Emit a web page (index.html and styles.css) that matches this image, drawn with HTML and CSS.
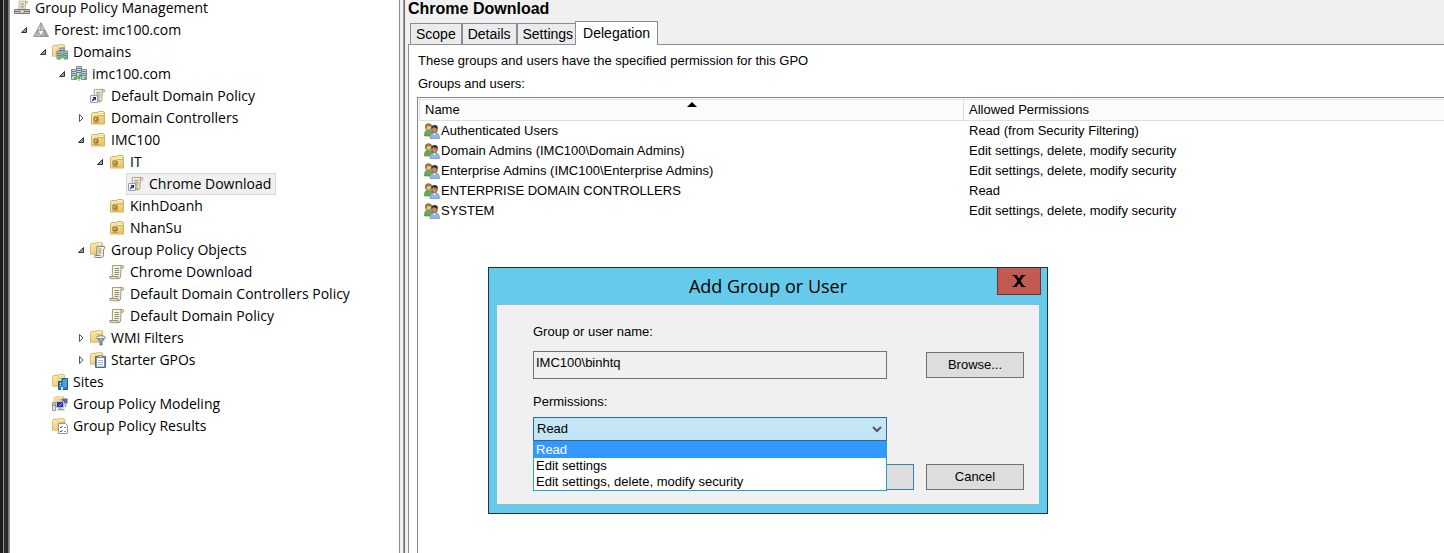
FILE: index.html
```html
<!DOCTYPE html>
<html lang="en">
<head>
<meta charset="utf-8">
<title>Group Policy Management</title>
<link rel="stylesheet" href="styles.css">
</head>
<body>
<svg class="defs" aria-hidden="true">
  <defs>
    <linearGradient id="gold" x1="0" y1="0" x2="1" y2="1"><stop offset="0" stop-color="#fdeeb4"/><stop offset="1" stop-color="#e8bf5e"/></linearGradient>
    <linearGradient id="paper" x1="0" y1="0" x2="1" y2="1"><stop offset="0" stop-color="#fffef2"/><stop offset="1" stop-color="#eadfb4"/></linearGradient>
    <linearGradient id="steel" x1="0" y1="0" x2="1" y2="1"><stop offset="0" stop-color="#f4f4f4"/><stop offset="1" stop-color="#a2a2a2"/></linearGradient>
  </defs>
  <symbol id="folder" viewBox="0 0 16 16">
    <path d="M1.500 14V3.500L2.500 2.500h5l1-1h5l1 1V14z" fill="url(#gold)" stroke="#d9b25c"/>
    <path d="M8.500 4.500h5M9.500 2.500h3" stroke="#fffbe2"/><path d="M8 5.500h6" stroke="#c79b40" stroke-width=".7"/>
  </symbol>
  <symbol id="sheet" viewBox="0 0 16 16">
    <path d="M3.500 1.500h9.500q1.800 0 1.800 1.600t-2.800 1.200L11.500 13q-.3 1.700-2 1.700H2Q.5 14.700.7 12.500h2.600z" fill="url(#paper)" stroke="#a59b78"/>
    <path d="M12.200 4.300q-.8-1.600.4-2.600M1.200 12.600h7.500q-.3 1.900 1 1.900" fill="none" stroke="#8f8768"/>
    <path d="M5.500 4.500H10M5.500 6.500H10M5.500 8.500H10M5.500 10.500H9.500" stroke="#8e8d85"/>
  </symbol>
  <symbol id="tower" viewBox="0 0 6 11">
    <path d="M.5.500h5v10h-5z" fill="#c9d4db" stroke="#788b98"/>
    <path d="M1 2.500h4M1 4.500h4M1 6.500h4" stroke="#667986"/><path d="M3 8h2v2H3z" fill="#28d417"/>
  </symbol>
  <symbol id="towers" viewBox="0 0 16 16">
    <use href="#tower" x="5" y="0" width="6" height="11"/><use href="#tower" x="0" y="3" width="6" height="11"/><use href="#tower" x="10" y="3" width="6" height="11"/>
    <path d="M6 12.500h4M8 10v5" stroke="#8b9ba5"/><path d="M7 11h2v2H7z" fill="#28d417"/>
  </symbol>
  <symbol id="i-gpm" viewBox="0 0 16 16">
    <use href="#sheet" x="2" y="0" width="13" height="12"/>
    <path d="M.5 9.500h15v4H.500z" fill="#c7c9c9" stroke="#7c7d7b"/><path d="M1 11.500h6M9 11.500h6" stroke="#777"/><path d="M6 10h4v3H6z" fill="#f2efdc" stroke="#777" stroke-width=".6"/>
  </symbol>
  <symbol id="i-forest" viewBox="0 0 16 16">
    <path d="M8 .8 15.500 14.500H.500z" fill="url(#steel)" stroke="#999" stroke-linejoin="round"/>
    <path d="M4.700 8.500h6.600L8 14z" fill="#fff" stroke="#999" stroke-linejoin="round"/>
    <path d="M8 1v7M4.500 9l-.8 5M11.500 9l.8 5" stroke="#777" stroke-width=".7"/>
  </symbol>
  <symbol id="i-domains" viewBox="0 0 16 16">
    <use href="#folder" x="-1" y="-1" width="15" height="15"/>
    <path d="M8 4h4v7H8z" fill="#b5c3cc" stroke="#5f7482" stroke-width=".8"/><path d="M5 7h4v8H5zM12 7h3.600v8H12z" fill="#b5c3cc" stroke="#5f7482" stroke-width=".8"/>
    <path d="M8.500 6.500h3M5.500 9.500h3M12.500 9.500h2.500M5.500 11.500h3M12.500 11.500h2.500" stroke="#566a77" stroke-width=".8"/><path d="M6 12.500h2v2H6zM9.500 12h2v2h-2zM13 12.500h2v2h-2z" fill="#28d417"/>
  </symbol>
  <symbol id="i-domain" viewBox="0 0 16 16"><use href="#towers" width="16" height="16"/></symbol>
  <symbol id="i-link" viewBox="0 0 16 16">
    <use href="#sheet" x="1" width="15" height="15"/>
    <path d="M.5 7.500h7v7h-7z" fill="#f5f6fb" stroke="#9b9fb3"/><path d="M2.300 12.700 5 10" stroke="#22226e" stroke-width="1.500"/><path d="M2.500 9H6v3.500z" fill="#22226e"/>
  </symbol>
  <symbol id="i-ou" viewBox="0 0 16 16">
    <use href="#folder" width="16" height="16"/>
    <path d="M4 7h4v4H4z" fill="#f3d887" stroke="#80601e"/><path d="M5.500 8.500H8V11H5.500z" fill="#a17e38"/><path d="M3.500 12.500h6" stroke="#c29a46"/>
  </symbol>
  <symbol id="i-gpo" viewBox="0 0 16 16"><use href="#sheet" width="16" height="16"/></symbol>
  <symbol id="i-gpos" viewBox="0 0 16 16">
    <use href="#folder" x="-1" y="-1" width="15" height="15"/>
    <path d="M7 4.500h7.500q1.300 1.500-.8 2.500l-.5 7q-.3 1.500-1.700 1.500H5q-1-1.300.2-2.500h1.500z" fill="#f5f1df" stroke="#858272"/><path d="M8.500 7h3M8.300 9h3M8.200 11h3M6 13.500h4.500" stroke="#858272"/>
  </symbol>
  <symbol id="i-wmi" viewBox="0 0 16 16">
    <use href="#folder" x="-1" y="-1" width="15" height="15"/>
    <path d="M6.500 7.500h9l-3.500 4v3.500h-2v-3.500z" fill="#9cabba" stroke="#65717f"/><ellipse cx="11" cy="7.300" rx="4.500" ry="1.500" fill="#f5f8fb" stroke="#71808f"/>
  </symbol>
  <symbol id="i-starter" viewBox="0 0 16 16">
    <use href="#folder" x="-1" y="-1" width="15" height="15"/>
    <path d="M5.500 4.500h10v11h-10z" fill="#7891ad" stroke="#4c6888"/><path d="M7 6h7v8.500H7z" fill="#fff"/><path d="M8 8.500h5M8 10.500h5M8 12.500h5" stroke="#9babba" stroke-width=".8"/><path d="M8.500 3.500h4v2h-4z" fill="#ddd" stroke="#777" stroke-width=".7"/>
  </symbol>
  <symbol id="i-sites" viewBox="0 0 16 16">
    <use href="#folder" x="-1" y="-1" width="15" height="15"/>
    <path d="M6.500 7.500H10v-3h5.500v11h-9z" fill="#2f83c1" stroke="#175a91"/><path d="M11.500 6h1M13.500 6h1M11.500 8h1M13.500 8h1M8 9.500h1M11.500 10h1M13.500 10h1M8 11.500h1M11.500 12h1M13.500 12h1" stroke="#c9ebff"/><path d="M9 13h2v3H9z" fill="#bfe5ff"/>
  </symbol>
  <symbol id="i-model" viewBox="0 0 16 16">
    <use href="#folder" x="1" y="-1" width="12" height="12"/>
    <path d="M9.500 2.500h6v5h-6z" fill="#5367b4" stroke="#b7b7b7"/><path d="M4.500 5.500h7v6h-7z" fill="#2b34b0" stroke="#c1c1c1"/><path d="m7 10 3-3" stroke="#8db6ff"/><path d="M5.500 13.500h7M8 11.500v2M13.500 8v3" stroke="#999" stroke-width="1.500"/><path d="M.5 6.500h3v8h-3z" fill="#e2e2e2" stroke="#999"/><path d="M1 9h2" stroke="#555"/>
  </symbol>
  <symbol id="i-results" viewBox="0 0 16 16">
    <use href="#folder" x="-1" y="-1" width="15" height="15"/>
    <path d="M6.500 5.500h7l2 2v8h-9z" fill="#fff" stroke="#8a99aa"/><path d="m8 9 1 1 1.500-2M8 13l1 1 1.500-2" fill="none" stroke="#315b91"/><path d="M12 9.500h2M12 13.500h2" stroke="#8a99aa"/>
  </symbol>
  <symbol id="i-users" viewBox="0 0 16 16">
    <path d="M.5 13Q0 7 4.500 7T9 13z" fill="#6ca653" stroke="#4c8439" stroke-width=".6"/>
    <circle cx="4.500" cy="4" r="3.200" fill="#ecc492" stroke="#8f6a32" stroke-width=".7"/><path d="M1 4Q1 .4 4.700.600T8 4Q5 2.500 3.500 3L2 6.500z" fill="#9a7835"/>
    <path d="M6 15.500Q5.500 9.500 10.500 9.500T15.500 15.500z" fill="#8bb8e8" stroke="#5a87bd" stroke-width=".6"/>
    <ellipse cx="10.500" cy="6.500" rx="2.900" ry="3.500" fill="#c28b5d" stroke="#664124" stroke-width=".6"/><path d="M7.400 6Q7 1.800 10.700 2T13.700 6Q11 4.800 9.500 4.200z" fill="#393536"/><path d="m9.500 10 1 2.500 1-2.500z" fill="#fff"/>
  </symbol>
  <symbol id="x-open" viewBox="0 0 8 8"><path d="M6.500 1.500v5h-5z" fill="#9b9b9b" stroke="#333"/></symbol>
  <symbol id="x-closed" viewBox="0 0 8 8"><path d="M2.500.500 6 4 2.500 7.500z" fill="#fff" stroke="#555"/></symbol>
</svg>

<div class="app">
  <div class="frame-edge"></div>
  <nav class="sidebar" aria-label="Console tree">
    <ul class="tree">
      <li>
        <div class="row root"><a class="item" href="#"><svg class="icon"><use href="#i-gpm"/></svg>Group Policy Management</a></div>
        <ul class="level-one">
          <li>
            <div class="row"><button class="toggle" aria-label="Collapse Forest"><svg><use href="#x-open"/></svg></button><a class="item" href="#"><svg class="icon"><use href="#i-forest"/></svg>Forest: imc100.com</a></div>
            <ul>
              <li>
                <div class="row"><button class="toggle" aria-label="Collapse Domains"><svg><use href="#x-open"/></svg></button><a class="item" href="#"><svg class="icon"><use href="#i-domains"/></svg>Domains</a></div>
                <ul>
                  <li>
                    <div class="row"><button class="toggle" aria-label="Collapse imc100.com"><svg><use href="#x-open"/></svg></button><a class="item" href="#"><svg class="icon"><use href="#i-domain"/></svg>imc100.com</a></div>
                    <ul>
                      <li><div class="row leaf"><a class="item" href="#"><svg class="icon"><use href="#i-link"/></svg>Default Domain Policy</a></div></li>
                      <li><div class="row"><button class="toggle" aria-label="Expand Domain Controllers"><svg><use href="#x-closed"/></svg></button><a class="item" href="#"><svg class="icon"><use href="#i-ou"/></svg>Domain Controllers</a></div></li>
                      <li>
                        <div class="row"><button class="toggle" aria-label="Collapse IMC100"><svg><use href="#x-open"/></svg></button><a class="item" href="#"><svg class="icon"><use href="#i-ou"/></svg>IMC100</a></div>
                        <ul>
                          <li>
                            <div class="row"><button class="toggle" aria-label="Collapse IT"><svg><use href="#x-open"/></svg></button><a class="item" href="#"><svg class="icon"><use href="#i-ou"/></svg>IT</a></div>
                            <ul><li><div class="row leaf"><a class="item selected" href="#" aria-current="true"><svg class="icon"><use href="#i-link"/></svg>Chrome Download</a></div></li></ul>
                          </li>
                          <li><div class="row leaf"><a class="item" href="#"><svg class="icon"><use href="#i-ou"/></svg>KinhDoanh</a></div></li>
                          <li><div class="row leaf"><a class="item" href="#"><svg class="icon"><use href="#i-ou"/></svg>NhanSu</a></div></li>
                        </ul>
                      </li>
                      <li>
                        <div class="row"><button class="toggle" aria-label="Collapse Group Policy Objects"><svg><use href="#x-open"/></svg></button><a class="item" href="#"><svg class="icon"><use href="#i-gpos"/></svg>Group Policy Objects</a></div>
                        <ul>
                          <li><div class="row leaf"><a class="item" href="#"><svg class="icon"><use href="#i-gpo"/></svg>Chrome Download</a></div></li>
                          <li><div class="row leaf"><a class="item" href="#"><svg class="icon"><use href="#i-gpo"/></svg>Default Domain Controllers Policy</a></div></li>
                          <li><div class="row leaf"><a class="item" href="#"><svg class="icon"><use href="#i-gpo"/></svg>Default Domain Policy</a></div></li>
                        </ul>
                      </li>
                      <li><div class="row"><button class="toggle" aria-label="Expand WMI Filters"><svg><use href="#x-closed"/></svg></button><a class="item" href="#"><svg class="icon"><use href="#i-wmi"/></svg>WMI Filters</a></div></li>
                      <li><div class="row"><button class="toggle" aria-label="Expand Starter GPOs"><svg><use href="#x-closed"/></svg></button><a class="item" href="#"><svg class="icon"><use href="#i-starter"/></svg>Starter GPOs</a></div></li>
                    </ul>
                  </li>
                </ul>
              </li>
              <li><div class="row leaf"><a class="item" href="#"><svg class="icon"><use href="#i-sites"/></svg>Sites</a></div></li>
              <li><div class="row leaf"><a class="item" href="#"><svg class="icon"><use href="#i-model"/></svg>Group Policy Modeling</a></div></li>
              <li><div class="row leaf"><a class="item" href="#"><svg class="icon"><use href="#i-results"/></svg>Group Policy Results</a></div></li>
            </ul>
          </li>
        </ul>
      </li>
    </ul>
  </nav>
  <div class="splitter"></div>
  <main class="details">
    <h1>Chrome Download</h1>
    <div class="tabs" role="tablist">
      <button class="tab" role="tab">Scope</button><button class="tab" role="tab">Details</button><button class="tab" role="tab">Settings</button><button class="tab active" role="tab" aria-selected="true">Delegation</button>
    </div>
    <section class="panel">
      <p>These groups and users have the specified permission for this GPO</p>
      <p id="list-label">Groups and users:</p>
      <div class="list">
        <table aria-labelledby="list-label">
          <thead><tr><th class="name-col" aria-sort="ascending"><div class="heading">Name<svg class="sort" viewBox="0 0 10 5"><path d="M0 5 5 0l5 5z"/></svg></div></th><th>Allowed Permissions</th></tr></thead>
          <tbody>
            <tr><td><div class="account"><svg class="icon"><use href="#i-users"/></svg>Authenticated Users</div></td><td>Read (from Security Filtering)</td></tr>
            <tr><td><div class="account"><svg class="icon"><use href="#i-users"/></svg>Domain Admins (IMC100\Domain Admins)</div></td><td>Edit settings, delete, modify security</td></tr>
            <tr><td><div class="account"><svg class="icon"><use href="#i-users"/></svg>Enterprise Admins (IMC100\Enterprise Admins)</div></td><td>Edit settings, delete, modify security</td></tr>
            <tr><td><div class="account"><svg class="icon"><use href="#i-users"/></svg>ENTERPRISE DOMAIN CONTROLLERS</div></td><td>Read</td></tr>
            <tr><td><div class="account"><svg class="icon"><use href="#i-users"/></svg>SYSTEM</div></td><td>Edit settings, delete, modify security</td></tr>
          </tbody>
        </table>
      </div>
    </section>
  </main>
</div>

<div class="dialog" role="dialog" aria-labelledby="dialog-title">
  <header class="titlebar">
    <h2 id="dialog-title">Add Group or User</h2>
    <button class="close" aria-label="Close"><svg viewBox="0 0 14 12"><path d="M.5 0h4L7 3.500 9.500 0h4v1H12L8.500 6l3.500 5h1.500v1h-4L7 8.300 4.500 12h-4v-1H2l3.500-5L2 1H.500z"/></svg></button>
  </header>
  <form class="client">
    <label for="account">Group or user name:</label>
    <div class="line">
      <input id="account" type="text" value="IMC100\binhtq" readonly>
      <button class="push" type="button">Browse...</button>
    </div>
    <label for="permission">Permissions:</label>
    <div class="combo">
      <select id="permission"><option>Read</option><option>Edit settings</option><option>Edit settings, delete, modify security</option></select>
      <svg class="chevron" viewBox="0 0 10 7"><path d="m1 1 4 4 4-4"/></svg>
      <ul class="options" role="listbox" aria-label="Permissions">
        <li class="current" role="option" aria-selected="true">Read</li>
        <li role="option">Edit settings</li>
        <li role="option">Edit settings, delete, modify security</li>
      </ul>
    </div>
    <div class="actions">
      <button class="push default" type="button" aria-label="Confirm"></button>
      <button class="push" type="button">Cancel</button>
    </div>
  </form>
</div>
</body>
</html>
```
FILE: styles.css
```css
* { box-sizing: border-box; }
body {
  margin: 0;
  position: relative;
  color: #000;
  background: #fff;
  font: 13px/16px "Liberation Sans", Arial, sans-serif;
}
button, input, select { margin: 0; padding: 0; color: inherit; font: inherit; border-radius: 0; }
h1, h2, p, ul { margin: 0; padding: 0; }
ul { list-style: none; }
.defs { position: absolute; width: 0; height: 0; }

.app { display: flex; height: 100vh; overflow: hidden; }
.frame-edge {
  flex: 0 0 10px;
  background: linear-gradient(90deg, #1b1b1c 3px, #929296 3px 4px, #2b2a2a 4px 8px, #77777b 8px 9px, #96969f 9px);
}

/* Console tree */
.sidebar { flex: 0 0 389px; overflow: hidden; font: 14px/16px "Open Sans", sans-serif; }
.tree { padding-left: 2px; }
.tree ul { padding-left: 19px; }
.tree .level-one { padding-left: 5px; }
.row { display: flex; height: 22px; }
.row.root { height: 19px; padding-bottom: 3px; }
.root .item { border-width: 0 1px; }
.leaf { padding-left: 14px; }
.toggle { display: flex; align-items: center; justify-content: center; flex: 0 0 14px; border: 0; background: none; }
.toggle svg { width: 8px; height: 8px; }
.item {
  display: flex;
  align-items: center;
  gap: 5px;
  padding: 0 4px 0 1px;
  border: 1px solid transparent;
  color: inherit;
  text-decoration: none;
  white-space: nowrap;
}
.item.selected { border-color: #dadada; background: #f0f0f0; }
.icon { flex: none; width: 16px; height: 16px; }

.splitter {
  flex: 0 0 6px;
  background: linear-gradient(90deg, #8b8d95 1px, #f0f0f0 1px 4px, #a0a0a0 4px 5px, #696969 5px);
}

/* Details pane */
.details { flex: 1; min-width: 0; display: flex; flex-direction: column; padding-left: 3px; background: #f0f0f0; }
.details h1 { padding-bottom: 3px; font-size: 16px; line-height: 18px; }
.tabs { display: flex; align-items: flex-end; padding-left: 2px; font-size: 14px; }
.tab { height: 21px; padding: 0 5px; border: 1px solid #898c95; border-bottom: 0; background: #ebebeb; }
.tab.active { position: relative; height: 24px; margin: 0 0 -1px -4px; padding: 0 7px 2px; background: #fff; }
.panel {
  flex: 1;
  display: flex;
  flex-direction: column;
  padding: 8px 0 0 8px;
  border: solid #898c95;
  border-width: 1px 0 0 1px;
  background: #fff;
}
.panel p { padding: 0 0 7px 1px; }
.panel #list-label { padding-bottom: 5px; }
.list { flex: 1; padding: 1px 0 0 1px; border: solid #828790; border-width: 1px 0 0 1px; }
table { width: 100%; border-collapse: separate; border-spacing: 0; table-layout: fixed; }
th { height: 22px; padding: 0 5px; border: solid #dedfe1; border-width: 1px 0 1px 1px; background: #fcfcfc; font-weight: normal; text-align: left; }
.name-col { width: 544px; }
.heading { display: grid; grid-template-columns: 1fr 10px 1fr; }
.sort { width: 10px; height: 5px; }
td { height: 20px; padding: 0 6px; }
.account { display: flex; align-items: center; gap: 1px; margin-left: -1px; }

/* Dialog */
.dialog { position: absolute; left: 488px; top: 267px; width: 560px; padding: 0 8px 8px; border: 1px solid #1d3440; background: #66caea; }
.titlebar { display: grid; height: 36px; align-items: center; }
.titlebar h2 { grid-area: 1 / 1; font: 18px/24px "Open Sans", sans-serif; text-align: center; }
.close {
  grid-area: 1 / 1;
  place-self: start end;
  display: grid;
  place-items: center;
  width: 44px;
  height: 27px;
  margin-right: -2px;
  border: 1px solid #6b3432;
  border-top: 0;
  background: #c15a50;
}
.close svg { width: 14px; height: 12px; }
.client { display: flex; flex-direction: column; padding: 19px 15px 14px 36px; border: 1px solid #8fb9cc; border-width: 1px 0; background: #f0f0f0; }
.client label { padding-bottom: 11px; }
.line { display: flex; justify-content: space-between; align-items: center; padding-bottom: 15px; }
.line input { width: 354px; height: 28px; padding: 0 2px 5px; border: 1px solid #707070; background: #f0f0f0; }
.push { width: 98px; height: 26px; border: 1px solid #707070; background: #ddd; }
.push.default { border-color: #3c7fb1; }
.client .combo { position: relative; width: 354px; margin-top: -4px; }
.combo select { display: block; width: 100%; height: 24px; padding: 0 3px; border: 1px solid #2a6a96; background: #c4e5f6; appearance: none; }
.chevron { position: absolute; top: 9px; right: 5px; width: 10px; height: 7px; fill: none; stroke: #555; stroke-width: 2; }
.options { position: absolute; top: 24px; left: 0; right: 0; border: 1px solid #26a0cc; border-top: 0; background: #fff; }
.options li { padding-left: 2px; }
.options .current { padding-top: 1px; background: #3399ff; color: #fff; }
.actions { display: flex; justify-content: flex-end; gap: 12px; padding-top: 23px; }
```
